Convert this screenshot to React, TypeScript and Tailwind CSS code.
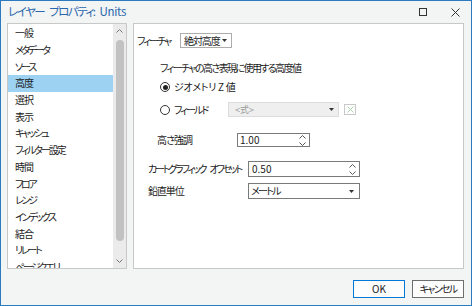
import React from "react";

const F = { fontFamily: '"Noto Sans CJK JP", "Noto Sans", sans-serif', fontFeatureSettings: '"palt"' } as React.CSSProperties;

const items: { t: string; c: string }[] = [
  { t: "一般", c: "tracking-[-1px]" },
  { t: "メタデータ", c: "tracking-[-2.4px]" },
  { t: "ソース", c: "tracking-[-2.2px]" },
  { t: "高度", c: "tracking-[-1px]" },
  { t: "選択", c: "tracking-[-1px]" },
  { t: "表示", c: "tracking-[-1px]" },
  { t: "キャッシュ", c: "tracking-[-2.1px]" },
  { t: "フィルター設定", c: "tracking-[-2px]" },
  { t: "時間", c: "tracking-[-1px]" },
  { t: "フロア", c: "tracking-[-2.4px]" },
  { t: "レンジ", c: "tracking-[-2.2px]" },
  { t: "インデックス", c: "tracking-[-2.1px]" },
  { t: "結合", c: "tracking-[-1px]" },
  { t: "リレート", c: "tracking-[-2.3px]" },
  { t: "ページクエリ", c: "tracking-[-2.1px]" },
];

function Tri() {
  return (
    <svg width="5" height="3" viewBox="0 0 5 3" className="shrink-0">
      <path d="M0 0H5L2.5 3Z" fill="#333" />
    </svg>
  );
}

function Spin({ h }: { h: number }) {
  return (
    <div className="flex flex-col items-center justify-center gap-[3px] pr-[3px]" style={{ height: h }}>
      <svg width="7" height="4" viewBox="0 0 7 4"><path d="M0.5 3.5L3.5 0.5L6.5 3.5" stroke="#555" fill="none" strokeWidth="1" /></svg>
      <svg width="7" height="4" viewBox="0 0 7 4"><path d="M0.5 0.5L3.5 3.5L6.5 0.5" stroke="#555" fill="none" strokeWidth="1" /></svg>
    </div>
  );
}

export default function App() {
  return (
    <div className="w-[472px] h-[306px] border border-[#2b7bc0] bg-[#f3f4f4] flex flex-col text-[10px] text-[#1a1a1a] overflow-hidden" style={F}>
      {/* title bar */}
      <div className="h-[22px] flex items-center pl-[7px] shrink-0">
        <span className="text-[11.5px] text-[#2867ad] leading-none whitespace-nowrap flex items-center">
          <span className="tracking-[-1.5px]">レイヤー</span>
          <span className="tracking-[-1.5px] ml-[5px]">プロパティ:</span>
          <span className="tracking-[-0.3px] ml-[5px]">Units</span>
        </span>
        <div className="ml-auto flex items-center">
          <div className="w-[8px] h-[8px] border border-[#333] mr-[24px]" />
          <svg width="9" height="9" viewBox="0 0 9 9" className="mr-[11px]">
            <path d="M0.5 0.5L8.5 8.5M8.5 0.5L0.5 8.5" stroke="#333" strokeWidth="1" />
          </svg>
        </div>
      </div>

      {/* main */}
      <div className="flex h-[246px] pl-[6px] pr-[7px] gap-[6px] shrink-0">
        {/* left list */}
        <div className="w-[120px] border border-[#c8c8c8] bg-white flex overflow-hidden">
          <div className="flex-1 flex flex-col pt-[1px] overflow-hidden">
            {items.map((it, i) => (
              <div
                key={it.t}
                className={`h-[16.7px] shrink-0 flex items-center pl-[7px] leading-none whitespace-nowrap ${it.c} ${i === 3 ? "bg-[#9dd2f3]" : ""}`}
              >
                {it.t}
              </div>
            ))}
          </div>
          <div className="w-[13px] bg-[#ebebeb] flex flex-col items-center pt-[4px] pb-[4px]">
            <svg width="7" height="4" viewBox="0 0 7 4" className="mt-[1px]"><path d="M0.5 3.5L3.5 0.5L6.5 3.5" stroke="#777" fill="none" /></svg>
            <div className="w-[8px] mt-[7px] h-[201px] rounded-full bg-[#c2c2c2]" />
            <svg width="7" height="4" viewBox="0 0 7 4" className="mt-auto mb-[1px]"><path d="M0.5 0.5L3.5 3.5L6.5 0.5" stroke="#777" fill="none" /></svg>
          </div>
        </div>

        {/* right panel */}
        <div className="flex-1 border border-[#c8c8c8] bg-white flex flex-col">
          {/* row 1 */}
          <div className="flex items-center h-[15px] mt-[9px] pl-[3px]">
            <span className="w-[43px] leading-none tracking-[-1.9px] whitespace-nowrap">フィーチャ</span>
            <div className="w-[52px] h-[15px] border border-[#adadad] flex items-center pl-[3px] pr-[4px] justify-between">
              <span className="leading-none tracking-[-1.1px] whitespace-nowrap">絶対高度</span>
              <Tri />
            </div>
          </div>
          {/* heading */}
          <div className="h-[14px] mt-[13px] ml-[26px] flex items-center leading-none tracking-[-1.6px] whitespace-nowrap">フィーチャの高さ表現に使用する高度値</div>
          {/* radio 1 */}
          <div className="h-[14px] mt-[5px] ml-[26px] flex items-center">
            <div className="w-[10px] h-[10px] rounded-full border border-[#333] flex items-center justify-center">
              <div className="w-[5px] h-[5px] rounded-full bg-[#222]" />
            </div>
            <span className="ml-[4px] leading-none whitespace-nowrap tracking-[-0.3px]">ジオメトリ Z 値</span>
          </div>
          {/* radio 2 */}
          <div className="h-[15px] mt-[8px] ml-[26px] flex items-center">
            <div className="w-[10px] h-[10px] rounded-full border border-[#333]" />
            <span className="ml-[4px] w-[54px] leading-none tracking-[-1.9px] whitespace-nowrap">フィールド</span>
            <div className="w-[111px] h-[15px] border border-[#dcdcdc] bg-[#efefef] flex items-center justify-between pl-[6px] pr-[4px]">
              <span className="text-[#9a9a9a] leading-none text-[9px]">&lt;式&gt;</span>
              <Tri />
            </div>
            <div className="ml-[5px] w-[12px] h-[11px] border border-[#c8c8c8] flex items-center justify-center">
              <svg width="7" height="7" viewBox="0 0 7 7"><path d="M0.5 0.5L6.5 6.5M6.5 0.5L0.5 6.5" stroke="#a8d4a8" strokeWidth="1" /></svg>
            </div>
          </div>
          {/* 高さ強調 */}
          <div className="h-[14px] mt-[16px] ml-[23px] flex items-center">
            <span className="w-[80px] leading-none tracking-[-1px] whitespace-nowrap">高さ強調</span>
            <div className="w-[73px] h-[14px] border border-[#7a7a7a] flex items-center justify-between pl-[2px]">
              <span className="leading-none">1.00</span>
              <Spin h={12} />
            </div>
          </div>
          {/* オフセット */}
          <div className="h-[16px] mt-[14px] ml-[14px] flex items-center">
            <span className="w-[100px] leading-none whitespace-nowrap flex items-center">
              <span className="tracking-[-2.2px]">カートグラフィック</span>
              <span className="tracking-[-2.2px] ml-[4px]">オフセット</span>
            </span>
            <div className="w-[112px] h-[16px] border border-[#7a7a7a] flex items-center justify-between pl-[3px]">
              <span className="leading-none">0.50</span>
              <Spin h={14} />
            </div>
          </div>
          {/* 鉛直単位 */}
          <div className="h-[16px] mt-[6px] ml-[14px] flex items-center">
            <span className="w-[100px] leading-none tracking-[-1.1px] whitespace-nowrap">鉛直単位</span>
            <div className="w-[112px] h-[16px] border border-[#7a7a7a] flex items-center justify-between pl-[2px] pr-[5px]">
              <span className="leading-none tracking-[-1.7px] whitespace-nowrap">メートル</span>
              <Tri />
            </div>
          </div>
        </div>
      </div>

      {/* footer */}
      <div className="flex justify-end gap-[7px] pr-[7px] mt-[11px]">
        <div className="w-[52px] h-[18px] border border-[#0078d7] bg-[#fdfdfd] flex items-center justify-center leading-none">OK</div>
        <div className="w-[52px] h-[18px] border border-[#6e6e6e] bg-[#fdfdfd] flex items-center justify-center leading-none tracking-[-1.7px] whitespace-nowrap">キャンセル</div>
      </div>
    </div>
  );
}
